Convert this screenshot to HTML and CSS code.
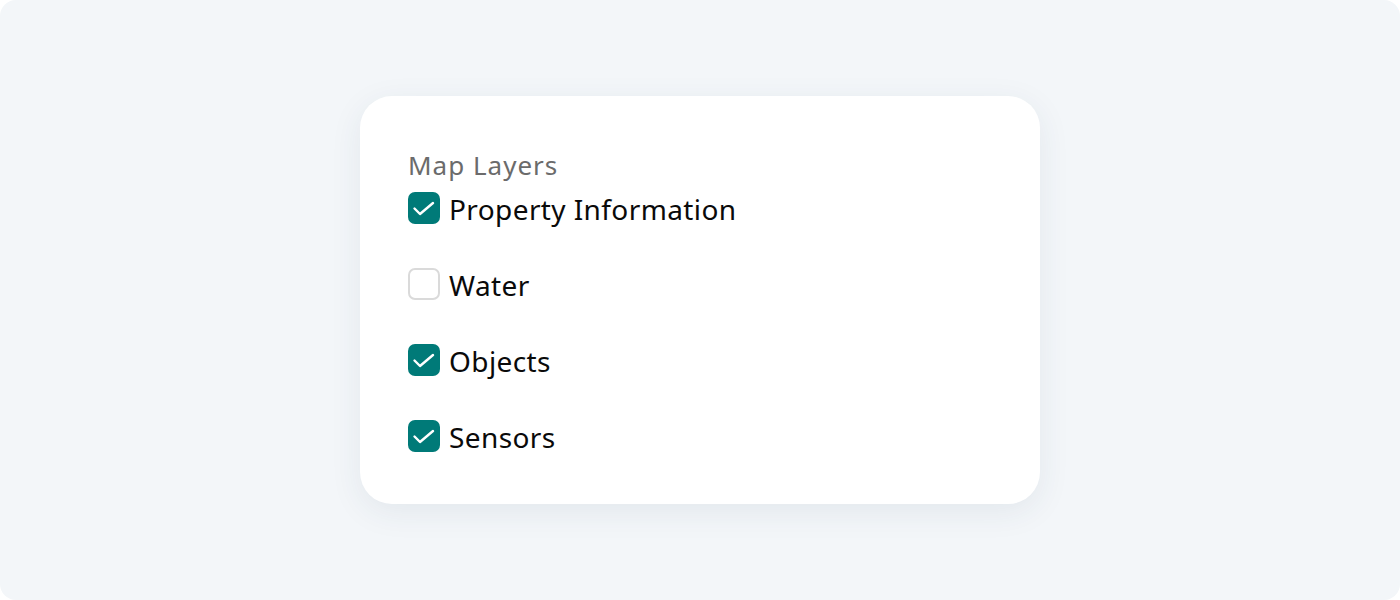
FILE: index.html
```html
<!DOCTYPE html>
<html>
<head>
<meta charset="utf-8">
<link rel="stylesheet" href="styles.css">
</head>
<body>
<div class="stage">
  <div class="card">
    <div class="title">Map Layers</div>
    <ul class="layers">
      <li class="layer"><span class="box checked"><svg viewBox="0 0 32 32"><path d="M6.5 16.5l5.5 5.5 13-11"/></svg></span><span class="label">Property Information</span></li>
      <li class="layer"><span class="box"></span><span class="label">Water</span></li>
      <li class="layer"><span class="box checked"><svg viewBox="0 0 32 32"><path d="M6.5 16.5l5.5 5.5 13-11"/></svg></span><span class="label">Objects</span></li>
      <li class="layer"><span class="box checked"><svg viewBox="0 0 32 32"><path d="M6.5 16.5l5.5 5.5 13-11"/></svg></span><span class="label">Sensors</span></li>
    </ul>
  </div>
</div>
</body>
</html>
```

FILE: styles.css
```css
html, body {
  margin: 0;
  padding: 0;
  background: #ffffff;
}
.stage {
  width: 1400px;
  height: 600px;
  box-sizing: border-box;
  background: #f3f6f9;
  border-radius: 16px;
  display: flex;
  justify-content: center;
  align-items: center;
  font-family: "Noto Sans", "Open Sans", sans-serif;
}
.card {
  width: 680px;
  height: 408px;
  box-sizing: border-box;
  background: #ffffff;
  border-radius: 32px;
  box-shadow: 0 8px 32px rgba(40, 60, 90, 0.08);
  padding: 48px 48px;
}
.title {
  font-size: 26px;
  line-height: 40px;
  letter-spacing: 1px;
  color: #6b6b6b;
  margin-top: 1px;
  margin-bottom: 7px;
}
.layers {
  list-style: none;
  margin: 0;
  padding: 0;
  display: flex;
  flex-direction: column;
  gap: 44px;
}
.layer {
  display: flex;
  align-items: center;
  gap: 9px;
  height: 32px;
}
.box {
  width: 32px;
  height: 32px;
  box-sizing: border-box;
  border-radius: 7px;
  border: 2px solid #dadada;
  background: #fff;
  flex: none;
  display: flex;
}
.box.checked {
  background: #007a78;
  border: none;
}
.box svg {
  width: 32px;
  height: 32px;
  fill: none;
  stroke: #ffffff;
  stroke-width: 2.4;
  stroke-linecap: round;
  stroke-linejoin: round;
}
.label {
  font-size: 28px;
  letter-spacing: 0.4px;
  color: #0a0a0a;
  line-height: 32px;
  position: relative;
  top: 1px;
}
```
